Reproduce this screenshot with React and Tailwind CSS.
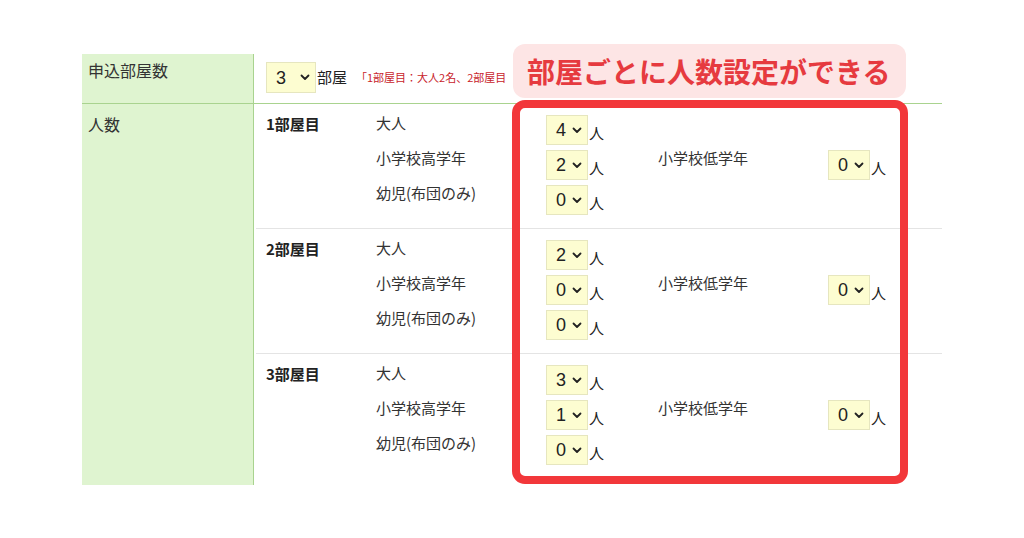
const FONT = '"Noto Sans CJK JP", "Noto Sans", sans-serif';
const NUM_FONT = '"Liberation Sans", "Noto Sans CJK JP", sans-serif';

const rooms = [
  { name: "1部屋目", adult: 4, high: 2, infant: 0, low: 0 },
  { name: "2部屋目", adult: 2, high: 0, infant: 0, low: 0 },
  { name: "3部屋目", adult: 3, high: 1, infant: 0, low: 0 },
];

function Chevron() {
  return (
    <svg width="10" height="7" viewBox="0 0 10 7" className="shrink-0">
      <path d="M1.5 1.5 L5 5 L8.5 1.5" fill="none" stroke="#222" strokeWidth="1.8" strokeLinecap="round" strokeLinejoin="round" />
    </svg>
  );
}

function FakeSelect({ value, wide }) {
  return (
    <div
      className={`flex items-center border border-[#e6e6bf] bg-[#fdfdd1] text-[18px] text-[#222] ${
        wide ? "w-[50px] pl-[9px] gap-[14px] h-[31px]" : "w-[42px] h-[30px] pl-[9px] gap-[6px]"
      }`}
      style={{ fontFamily: NUM_FONT }}
    >
      <span className="leading-none">{value}</span>
      <Chevron />
    </div>
  );
}

function Count({ value }) {
  return (
    <div className="flex items-center h-[30px]">
      <FakeSelect value={value} />
      <span className="ml-[1px] mt-[5px] text-[15px] leading-[18px] text-[#222]">人</span>
    </div>
  );
}

function Room({ room, last }) {
  return (
    <div className={`flex h-[125px] pl-[10px] ${last ? "" : "border-b border-[#e4e4e4]"}`}>
      <div className="w-[110px] pt-[10px] text-[15px] leading-[20px] font-bold text-[#222]">{room.name}</div>
      <div className="w-[170px] pt-[10px] text-[15px] leading-[18px] text-[#333]">
        <div className="h-[35px]">大人</div>
        <div className="h-[35px]">小学校高学年</div>
        <div className="h-[35px]">幼児(布団のみ)</div>
      </div>
      <div className="w-[112px] pt-[11px] flex flex-col gap-[5px]">
        <Count value={room.adult} />
        <Count value={room.high} />
        <Count value={room.infant} />
      </div>
      <div className="w-[170px] pt-[45px] text-[15px] leading-[18px] text-[#333]">小学校低学年</div>
      <div className="pt-[46px]">
        <Count value={room.low} />
      </div>
    </div>
  );
}

export default function App() {
  return (
    <div className="relative w-[1024px] h-[538px] bg-white overflow-hidden" style={{ fontFamily: FONT }}>
      <div className="pt-[54px] pl-[82px]">
        <div className="w-[860px]">
          {/* 申込部屋数 */}
          <div className="flex h-[50px] border-b border-[#a9d38f]">
            <div className="w-[172px] bg-[#dff4d0] border-r border-[#a9d38f] pl-[6px] pt-[6px] text-[16px] leading-[20px] text-[#333]">
              申込部屋数
            </div>
            <div className="flex-1 flex items-center pl-[12px] pb-[2px]">
              <FakeSelect value={3} wide />
              <span className="ml-[1px] text-[15px] text-[#222]">部屋</span>
              <span className="ml-[9px] w-[150px] overflow-hidden text-[11px] text-[#c8232b] whitespace-nowrap">
                「1部屋目：大人2名、2部屋目：大人2名」
              </span>
            </div>
          </div>
          {/* 人数 */}
          <div className="flex h-[381px]">
            <div className="w-[172px] bg-[#dff4d0] border-r border-[#a9d38f] pl-[6px] pt-[10px] text-[16px] leading-[20px] text-[#333]">
              人数
            </div>
            <div className="flex-1 pl-[2px]">
              {rooms.map((r, i) => (
                <Room key={r.name} room={r} last={i === rooms.length - 1} />
              ))}
            </div>
          </div>
        </div>
      </div>

      {/* annotation */}
      <div className="absolute left-[513px] top-[44px] w-[393px] h-[54px] rounded-[12px] bg-[#fde5e5] flex items-center pl-[14px] text-[28px] font-bold text-[#e63a3f] leading-none">
        部屋ごとに人数設定ができる
      </div>
      <div className="absolute left-[512px] top-[100px] w-[396px] h-[384px] rounded-[13px] border-[8px] border-[#f2373a] pointer-events-none" />
    </div>
  );
}
